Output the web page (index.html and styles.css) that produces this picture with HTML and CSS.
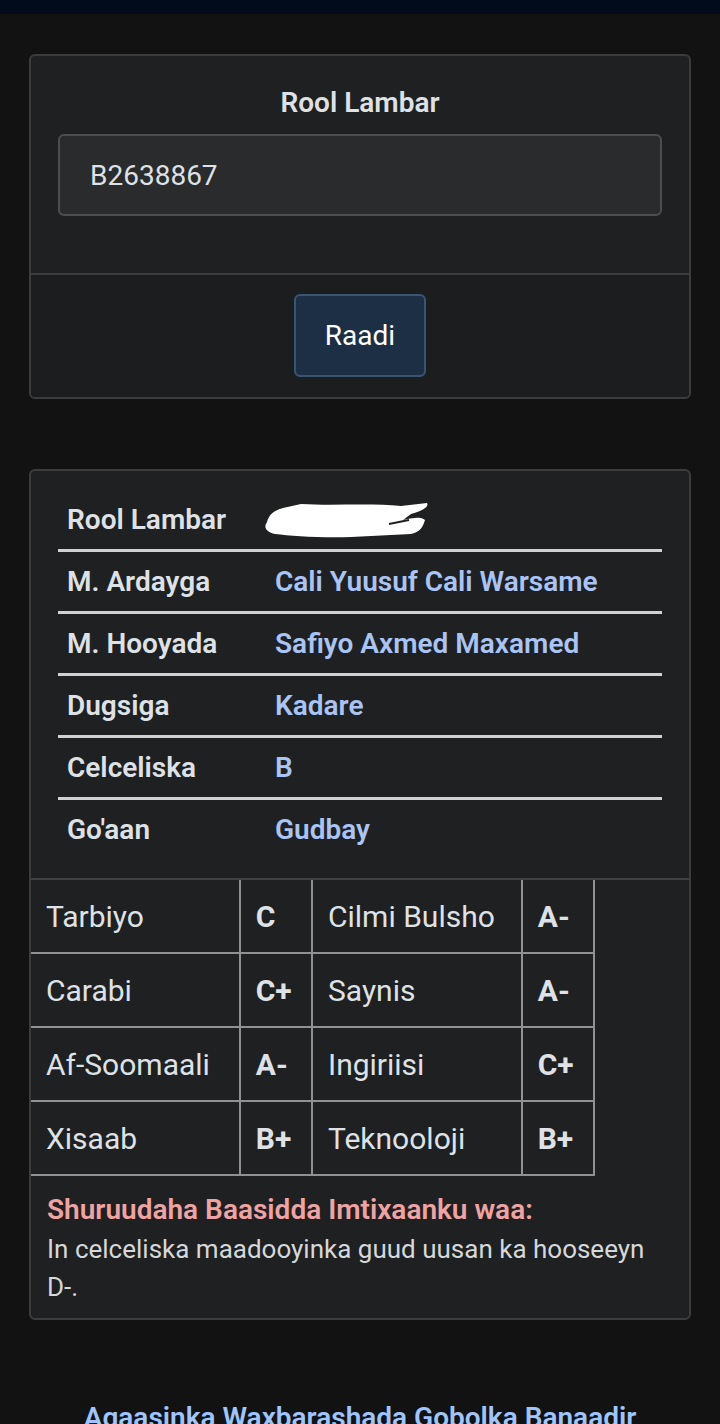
FILE: index.html
```html
<!DOCTYPE html>
<html lang="so">
<head>
    <meta charset="UTF-8">
    <meta name="viewport" content="width=device-width, initial-scale=1.0">
    <title>Natiijada Imtixaanka</title>
    <link rel="stylesheet" href="styles.css">
</head>
<body>
    <div class="topbar"></div>

    <div class="page">
        <form class="card search-card">
            <div class="card-body">
                <label class="search-label" for="rollInput">Rool Lambar</label>
                <input class="search-input" type="text" id="rollInput" value="B2638867">
            </div>
            <div class="card-footer">
                <button type="submit" class="btn-search">Raadi</button>
            </div>
        </form>

        <div class="card result-card">
            <div class="info">
                <div class="info-row">
                    <span class="info-label">Rool Lambar</span>
                    <span class="info-value">
                        <svg class="scribble" width="170" height="40" viewBox="0 0 170 40">
                            <path d="M6 22 C8 14 14 10 22 8 L40 4 C70 6 110 3 140 6 L166 3 C168 6 164 10 150 14 L142 20 C150 18 160 16 164 20 C162 26 160 32 150 34 L90 37 C60 38 30 36 14 34 C6 32 2 28 6 22 Z" fill="#ffffff"/>
                            <path d="M128 24 L148 20" stroke="#1f2021" stroke-width="2"/>
                        </svg>
                    </span>
                </div>
                <div class="info-row">
                    <span class="info-label">M. Ardayga</span>
                    <span class="info-value">Cali Yuusuf Cali Warsame</span>
                </div>
                <div class="info-row">
                    <span class="info-label">M. Hooyada</span>
                    <span class="info-value">Safiyo Axmed Maxamed</span>
                </div>
                <div class="info-row">
                    <span class="info-label">Dugsiga</span>
                    <span class="info-value">Kadare</span>
                </div>
                <div class="info-row">
                    <span class="info-label">Celceliska</span>
                    <span class="info-value">B</span>
                </div>
                <div class="info-row">
                    <span class="info-label">Go'aan</span>
                    <span class="info-value">Gudbay</span>
                </div>
            </div>

            <table class="grades">
                <tr>
                    <td class="subject">Tarbiyo</td>
                    <td class="grade">C</td>
                    <td class="subject">Cilmi Bulsho</td>
                    <td class="grade">A-</td>
                </tr>
                <tr>
                    <td class="subject">Carabi</td>
                    <td class="grade">C+</td>
                    <td class="subject">Saynis</td>
                    <td class="grade">A-</td>
                </tr>
                <tr>
                    <td class="subject">Af-Soomaali</td>
                    <td class="grade">A-</td>
                    <td class="subject">Ingiriisi</td>
                    <td class="grade">C+</td>
                </tr>
                <tr>
                    <td class="subject">Xisaab</td>
                    <td class="grade">B+</td>
                    <td class="subject">Teknooloji</td>
                    <td class="grade">B+</td>
                </tr>
            </table>

            <div class="note">
                <h4>Shuruudaha Baasidda Imtixaanku waa:</h4>
                <p>In celceliska maadooyinka guud uusan ka hooseeyn D-.</p>
            </div>
        </div>

        <h2 class="footer-title">Agaasinka Waxbarashada Gobolka Banaadir</h2>
    </div>
</body>
</html>
```

FILE: styles.css
```css
body {
    font-family: Roboto, "Noto Sans", sans-serif;
    background-color: #121212;
    color: #dee2e6;
    margin: 0;
    padding: 0;
}
.topbar {
    height: 14px;
    background-color: #020b1a;
}
.page {
    padding: 40px 29px 0;
}
.card {
    background-color: #1f2021;
    border: 2px solid #3a3c3e;
    border-radius: 6px;
    overflow: hidden;
}
.card-body {
    padding: 30px 27px 57px;
    text-align: center;
}
.search-label {
    display: block;
    font-size: 28px;
    line-height: 33px;
    font-weight: 600;
    color: #dee2e6;
}
.search-input {
    display: block;
    box-sizing: border-box;
    width: 100%;
    height: 82px;
    margin-top: 15px;
    padding: 0 30px;
    font-family: inherit;
    font-size: 28px;
    color: #dee2e6;
    background-color: #2a2b2c;
    border: 2px solid #4c4e50;
    border-radius: 6px;
    outline: none;
}
.card-footer {
    border-top: 2px solid #3a3c3e;
    background-color: #1c1d1e;
    padding: 19px 0 20px;
    text-align: center;
}
.btn-search {
    width: 132px;
    height: 83px;
    font-family: inherit;
    font-size: 28px;
    color: #ffffff;
    background-color: #1d2f45;
    border: 2px solid #3a5572;
    border-radius: 6px;
    cursor: pointer;
}
.result-card {
    margin-top: 70px;
}
.info {
    padding: 19px 27px 19px;
    border-bottom: 2px solid #3e4042;
}
.info-row {
    display: flex;
    align-items: center;
    height: 59px;
    padding-left: 9px;
    font-size: 28px;
    font-weight: 600;
    border-bottom: 3px solid #cfd2d5;
}
.info-row:last-child {
    border-bottom: none;
}
.info-label {
    width: 208px;
    color: #dee2e6;
}
.info-value {
    color: #a9c4f5;
    display: flex;
    align-items: center;
}
.scribble {
    margin-left: -14px;
}
.grades {
    border-collapse: collapse;
    width: 564px;
    font-size: 30px;
}
.grades td {
    height: 72px;
    padding: 0 0 0 15px;
    border: 2px solid #8f9193;
    color: #dee2e6;
}
.grades tr:first-child td {
    border-top: none;
}
.grades td:first-child {
    border-left: none;
}
.subject {
    width: 192px;
}
.grade {
    width: 55px;
    font-weight: 700;
}
.note {
    padding: 17px 16px 12px;
}
.note h4 {
    margin: 0;
    font-size: 28px;
    line-height: 34px;
    font-weight: 600;
    color: #f0a3a3;
}
.note p {
    margin: 3px 0 0;
    font-size: 26px;
    line-height: 38px;
    color: #d5d8db;
}
.footer-title {
    margin: 82px 0 0;
    text-align: center;
    font-size: 28px;
    line-height: 32px;
    font-weight: 600;
    color: #9ec5fe;
}
```
